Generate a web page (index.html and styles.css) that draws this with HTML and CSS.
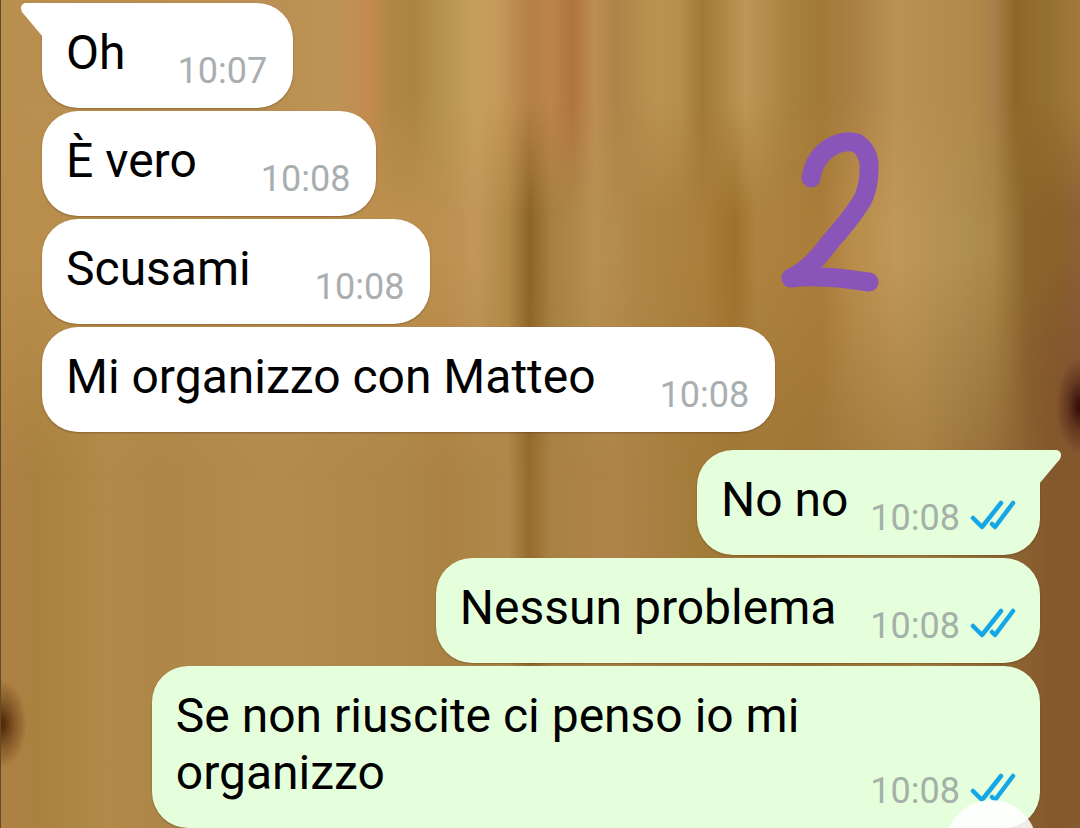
FILE: index.html
```html
<!DOCTYPE html>
<html lang="it">
<head>
  <meta charset="UTF-8" />
  <meta name="viewport" content="width=device-width, initial-scale=1.0" />
  <title>Chat</title>
  <link rel="stylesheet" href="styles.css">
</head>
<body>
  <svg class="symbols" aria-hidden="true">
    <symbol id="read" viewBox="0 0 46 30">
      <path d="M3 18 L12 27 L31 3 M22 24 L25 27 L43 3" fill="none" stroke="#15a6e6" stroke-width="4.500" stroke-linecap="round" stroke-linejoin="round" />
    </symbol>
  </svg>

  <main class="chat">
    <div class="group">
      <div class="bubble in first">
        <svg class="tail" viewBox="0 0 22 34" aria-hidden="true"><path d="M22 0 H4 Q-2 2 1 9 L22 34 Z" /></svg>
        <p>Oh</p>
        <div class="meta"><time>10:07</time></div>
      </div>
      <div class="bubble in">
        <p>È vero</p>
        <div class="meta"><time>10:08</time></div>
      </div>
      <div class="bubble in">
        <p>Scusami</p>
        <div class="meta"><time>10:08</time></div>
      </div>
      <div class="bubble in">
        <p>Mi organizzo con Matteo</p>
        <div class="meta"><time>10:08</time></div>
      </div>
    </div>

    <div class="group">
      <div class="bubble out first">
        <svg class="tail" viewBox="0 0 22 34" aria-hidden="true"><path d="M0 0 H18 Q24 2 21 9 L0 34 Z" /></svg>
        <p>No no</p>
        <div class="meta"><time>10:08</time><svg class="check" role="img" aria-label="Letto"><use href="#read" /></svg></div>
      </div>
      <div class="bubble out">
        <p>Nessun problema</p>
        <div class="meta"><time>10:08</time><svg class="check" role="img" aria-label="Letto"><use href="#read" /></svg></div>
      </div>
      <div class="bubble out">
        <p>Se non riuscite ci penso io mi organizzo</p>
        <div class="meta"><time>10:08</time><svg class="check" role="img" aria-label="Letto"><use href="#read" /></svg></div>
      </div>
    </div>
  </main>

  <svg class="doodle" viewBox="0 0 100 162" aria-hidden="true">
    <path d="M30 47 Q34 22 56 13 Q66 9 76 12 Q89 21 88 38 Q88 57 81 70 Q68 90 49 111 Q30 138 10 147 Q24 145 39 146 C58 146 70 149 88 151" />
  </svg>

  <button class="scroll-down" aria-label="Vai in fondo"></button>
</body>
</html>
```

FILE: styles.css
```css
* { box-sizing: border-box; }
body {
  font-family: Roboto, 'Helvetica Neue', Arial, sans-serif;
  margin: 0; color: #000;
  min-height: 100vh;
  position: relative; z-index: 0;
  border-left: 1px solid #5f4a2a;
  background: linear-gradient(to right, #b08045 0%, #a9813f 3%, #ab8541 6%, #b18a4a 10%, #ae8748 15%, #b38c4e 25%, #ae8748 37%, #ab8243 41%, #af894b 47%, #956c2e 49%, #aa8144 51%, #ae844a 57%, #a47c3a 64%, #a07636 75%, #a68044 85%, #97703a 91%, #85592c 97%, #855a2c 100%);
}
/* wood planks: middle rows, brighter top rows, then the knots */
body::before, body::after, .chat::before {
  content: '';
  position: absolute; inset: 0;
}
body::before {
  z-index: -3;
  background: linear-gradient(to right, #b98e4c 0%, #bd904f 41%, #c3965a 44%, #b08945 47%, #8c6426 49%, #a58040 51%, #b79152 55%, #b08646 59%, #ab7e3b 65%, #9e722d 68%, #ae823f 70%, #ab7c3a 76%, #b98d4c 79%, #c09857 83%, #b18f53 89%, #a98848 92%, #8b652c 95%, #8a612a 98%, #8d6038 100%);
  mask-image: linear-gradient(to bottom, #000 260px, transparent 480px);
}
.chat::before {
  z-index: -2;
  background: linear-gradient(to right, #b98f50 0%, #ba9152 27%, #bd9458 31%, #c48a4e 34%, #b08845 36%, #ab8540 38%, #b5944e 41%, #c6a05b 44%, #c69959 46%, #b38145 49%, #bd8348 51%, #b07440 53%, #bd8d53 55%, #ae8448 57%, #ba9350 61%, #b58e4c 63%, #a07935 65%, #bd9755 69%, #a8823f 73%, #a27a36 76%, #aa8044 79%, #b99254 83%, #b08a48 90%, #a8804a 92%, #8f6828 94%, #94702f 97%, #a27a3c 100%);
  mask-image: linear-gradient(to bottom, #000 100px, transparent 220px);
}
body::after {
  z-index: -1;
  background:
    radial-gradient(ellipse 26px 44px at 0 724px, #552c08 10%, rgba(85,44,8,0.5) 50%, transparent),
    radial-gradient(ellipse 24px 48px at 100% 406px, #38120a 10%, rgba(64,24,14,0.5) 50%, transparent),
    radial-gradient(ellipse 70px 130px at 100% 380px, rgba(122,72,52,0.4), transparent);
}
.symbols { display: none; }
.chat {
  display: flex; flex-direction: column;
  gap: 18px;
  padding: 3px 40px 0 41px;
}
.group {
  display: flex; flex-direction: column;
  gap: 3px;
}
.bubble {
  position: relative;
  display: flex;
  align-items: flex-end;
  justify-content: space-between;
  max-width: 89%;
  padding: 21px 26px 16px 24px;
  border-radius: 36px;
  box-shadow: 0 1px 2px rgba(70,45,10,0.4);
}
.bubble p {
  margin: 0 0 11px;
  font-size: 48px; line-height: 57px;
}
.in { align-self: flex-start; background: #fff; gap: 64px; }
.in.first { gap: 52px; border-top-left-radius: 0; }
.out { align-self: flex-end; background: #e5ffdc; gap: 34px; padding-right: 24px; }
.out.first { gap: 22px; border-top-right-radius: 0; }
.meta {
  display: flex; align-items: center;
  gap: 10px;
  font-size: 36px; line-height: 42px;
  color: #a9aeb1;
}
.out .meta { color: #a5b0a8; }
.check { width: 46px; height: 30px; margin-bottom: 6px; }
.tail {
  position: absolute; top: 0;
  width: 22px; height: 34px;
}
.in .tail { right: 100%; fill: #fff; margin-right: -1px; }
.out .tail { left: 100%; fill: #e5ffdc; margin-left: -1px; }
.doodle {
  position: absolute;
  top: 131px; right: 199px;
  width: 100px; height: 162px;
  fill: none;
  stroke: #8a55b9; stroke-width: 19;
  stroke-linecap: round; stroke-linejoin: round;
}
.scroll-down {
  position: fixed;
  right: 43px; bottom: -64px;
  width: 92px; height: 92px;
  padding: 0; border: none; border-radius: 50%;
  background: rgba(255,255,255,0.88);
  cursor: pointer;
}
```
